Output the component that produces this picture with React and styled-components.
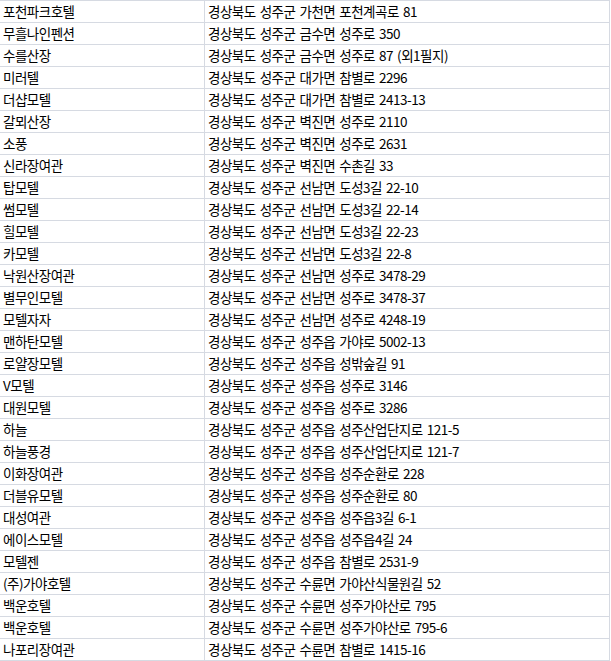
import React from "react";
import styled, { createGlobalStyle } from "styled-components";

const GlobalStyle = createGlobalStyle`
  html, body { margin: 0; padding: 0; background: #ffffff; }
  body { font-family: "Noto Sans CJK KR", "Noto Sans", sans-serif; }
`;

const rows = [
  ["포천파크호텔", "경상북도 성주군 가천면 포천계곡로 81"],
  ["무흘나인펜션", "경상북도 성주군 금수면 성주로 350"],
  ["수를산장", "경상북도 성주군 금수면 성주로 87 (외1필지)"],
  ["미러텔", "경상북도 성주군 대가면 참별로 2296"],
  ["더샵모텔", "경상북도 성주군 대가면 참별로 2413-13"],
  ["갈뫼산장", "경상북도 성주군 벽진면 성주로 2110"],
  ["소풍", "경상북도 성주군 벽진면 성주로 2631"],
  ["신라장여관", "경상북도 성주군 벽진면 수촌길 33"],
  ["탑모텔", "경상북도 성주군 선남면 도성3길 22-10"],
  ["썸모텔", "경상북도 성주군 선남면 도성3길 22-14"],
  ["힐모텔", "경상북도 성주군 선남면 도성3길 22-23"],
  ["카모텔", "경상북도 성주군 선남면 도성3길 22-8"],
  ["낙원산장여관", "경상북도 성주군 선남면 성주로 3478-29"],
  ["별무인모텔", "경상북도 성주군 선남면 성주로 3478-37"],
  ["모텔자자", "경상북도 성주군 선남면 성주로 4248-19"],
  ["맨하탄모텔", "경상북도 성주군 성주읍 가야로 5002-13"],
  ["로얄장모텔", "경상북도 성주군 성주읍 성밖숲길 91"],
  ["V모텔", "경상북도 성주군 성주읍 성주로 3146"],
  ["대원모텔", "경상북도 성주군 성주읍 성주로 3286"],
  ["하늘", "경상북도 성주군 성주읍 성주산업단지로 121-5"],
  ["하늘풍경", "경상북도 성주군 성주읍 성주산업단지로 121-7"],
  ["이화장여관", "경상북도 성주군 성주읍 성주순환로 228"],
  ["더블유모텔", "경상북도 성주군 성주읍 성주순환로 80"],
  ["대성여관", "경상북도 성주군 성주읍 성주읍3길 6-1"],
  ["에이스모텔", "경상북도 성주군 성주읍 성주읍4길 24"],
  ["모텔젠", "경상북도 성주군 성주읍 참별로 2531-9"],
  ["(주)가야호텔", "경상북도 성주군 수륜면 가야산식물원길 52"],
  ["백운호텔", "경상북도 성주군 수륜면 성주가야산로 795"],
  ["백운호텔", "경상북도 성주군 수륜면 성주가야산로 795-6"],
  ["나포리장여관", "경상북도 성주군 수륜면 참별로 1415-16"],
];

const Sheet = styled.div`
  display: grid;
  grid-template-columns: 205px 405px;
  border-top: 1px solid #d6dae2;
  width: 610px;
`;

const Cell = styled.div`
  box-sizing: border-box;
  height: 22px;
  padding-left: ${(p) => (p.$address ? 3 : 3)}px;
  border-bottom: 1px solid #d6dae2;
  border-right: 1px solid #d6dae2;
  font-size: 13.5px;
  letter-spacing: -0.5px;
  word-spacing: 1.5px;
  line-height: 21px;
  color: #000;
  white-space: nowrap;
  overflow: hidden;
`;

export default function App() {
  return (
    <>
      <GlobalStyle />
      <Sheet>
        {rows.map(([name, addr], i) => (
          <React.Fragment key={i}>
            <Cell>{name}</Cell>
            <Cell $address>{addr}</Cell>
          </React.Fragment>
        ))}
      </Sheet>
    </>
  );
}
